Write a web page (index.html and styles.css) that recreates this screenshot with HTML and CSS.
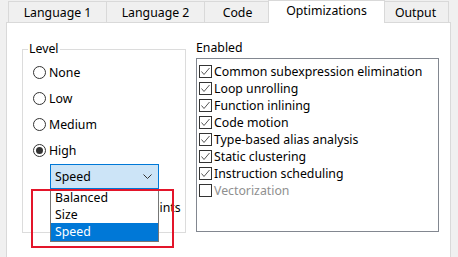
FILE: index.html
```html
<!DOCTYPE html>
<html>
<head>
<meta charset="utf-8">
<link rel="stylesheet" href="styles.css">
</head>
<body>
<div class="tabs">
  <div class="tab t-lang1">Language 1</div>
  <div class="tab t-lang2">Language 2</div>
  <div class="tab t-code">Code</div>
  <div class="tab t-opt selected">Optimizations</div>
  <div class="tab t-out">Output</div>
</div>
<div class="panel">
  <fieldset class="level">
    <legend>Level</legend>
    <div class="radio-row"><span class="radio"></span><span>None</span></div>
    <div class="radio-row"><span class="radio"></span><span>Low</span></div>
    <div class="radio-row"><span class="radio"></span><span>Medium</span></div>
    <div class="radio-row"><span class="radio checked"></span><span>High</span></div>
    <div class="combo-wrap">
      <div class="combo">
        <span>Speed</span>
        <svg class="chev" width="9" height="5" viewBox="0 0 9 5"><path d="M0.5 0.5 L4.5 4.5 L8.5 0.5" fill="none" stroke="#333" stroke-width="1"/></svg>
      </div>
      <div class="droplist">
        <div class="opt">Balanced</div>
        <div class="opt">Size</div>
        <div class="opt sel">Speed</div>
      </div>
      <div class="highlight"></div>
    </div>
    <div class="hidden-row"><span class="cb"></span><span>Respect constraints</span></div>
  </fieldset>
  <div class="enabled">
    <div class="enabled-label">Enabled</div>
    <div class="listbox">
      <div class="item"><svg class="cb" width="13" height="13" viewBox="0 0 13 13"><rect x="0.5" y="0.5" width="12" height="12" fill="#fff" stroke="#333"/><path d="M2.5 6.5 L5 9.5 L10.5 3" fill="none" stroke="#555" stroke-width="1"/></svg><span>Common subexpression elimination</span></div>
      <div class="item"><svg class="cb" width="13" height="13" viewBox="0 0 13 13"><rect x="0.5" y="0.5" width="12" height="12" fill="#fff" stroke="#333"/><path d="M2.5 6.5 L5 9.5 L10.5 3" fill="none" stroke="#555" stroke-width="1"/></svg><span>Loop unrolling</span></div>
      <div class="item"><svg class="cb" width="13" height="13" viewBox="0 0 13 13"><rect x="0.5" y="0.5" width="12" height="12" fill="#fff" stroke="#333"/><path d="M2.5 6.5 L5 9.5 L10.5 3" fill="none" stroke="#555" stroke-width="1"/></svg><span>Function inlining</span></div>
      <div class="item"><svg class="cb" width="13" height="13" viewBox="0 0 13 13"><rect x="0.5" y="0.5" width="12" height="12" fill="#fff" stroke="#333"/><path d="M2.5 6.5 L5 9.5 L10.5 3" fill="none" stroke="#555" stroke-width="1"/></svg><span>Code motion</span></div>
      <div class="item"><svg class="cb" width="13" height="13" viewBox="0 0 13 13"><rect x="0.5" y="0.5" width="12" height="12" fill="#fff" stroke="#333"/><path d="M2.5 6.5 L5 9.5 L10.5 3" fill="none" stroke="#555" stroke-width="1"/></svg><span>Type-based alias analysis</span></div>
      <div class="item"><svg class="cb" width="13" height="13" viewBox="0 0 13 13"><rect x="0.5" y="0.5" width="12" height="12" fill="#fff" stroke="#333"/><path d="M2.5 6.5 L5 9.5 L10.5 3" fill="none" stroke="#555" stroke-width="1"/></svg><span>Static clustering</span></div>
      <div class="item"><svg class="cb" width="13" height="13" viewBox="0 0 13 13"><rect x="0.5" y="0.5" width="12" height="12" fill="#fff" stroke="#333"/><path d="M2.5 6.5 L5 9.5 L10.5 3" fill="none" stroke="#555" stroke-width="1"/></svg><span>Instruction scheduling</span></div>
      <div class="item disabled"><svg class="cb" width="13" height="13" viewBox="0 0 13 13"><rect x="0.5" y="0.5" width="12" height="12" fill="#fff" stroke="#333"/></svg><span>Vectorization</span></div>
    </div>
  </div>
</div>
</body>
</html>
```
FILE: styles.css
```css
html, body {
  margin: 0;
  padding: 0;
  background: #f0f0f0;
  width: 458px;
  height: 257px;
  overflow: hidden;
  font-family: "Noto Sans", "Open Sans", sans-serif;
  font-size: 12.3px;
  color: #000;
}
.tabs {
  display: flex;
  align-items: flex-end;
  height: 22px;
  padding-left: 8px;
}
.tab {
  box-sizing: border-box;
  height: 21px;
  border: 1px solid #d9d9d9;
  border-bottom: none;
  background: #f0f0f0;
  display: flex;
  align-items: center;
  justify-content: center;
  line-height: 16px;
  padding-top: 1px;
}
.t-lang1 { width: 99px; }
.t-lang2 { width: 99px; margin-left: -1px; }
.t-code { width: 67px; margin-left: -1px; }
.t-opt { width: 117px; margin-left: -3px; }
.t-out { width: 67px; margin-left: -3px; }
.tab.selected {
  height: 23px;
  margin-bottom: -1px;
  background: #fff;
  position: relative;
  z-index: 1;
  padding-top: 0;
  padding-bottom: 3px;
}
.panel {
  box-sizing: border-box;
  margin-left: 6px;
  width: 445px;
  height: 240px;
  border: 1px solid #d9d9d9;
  background: #fff;
  display: flex;
  align-items: flex-start;
  padding: 18px 0 0 15px;
  gap: 10px;
}
.level {
  box-sizing: border-box;
  margin: 0;
  width: 164px;
  height: 192px;
  border: 1px solid #dcdcdc;
  padding: 2px 0 0 10px;
  position: relative;
}
.level legend {
  padding: 0 1px;
  margin-left: -5px;
  line-height: 16px;
}
.radio-row {
  height: 26px;
  display: flex;
  align-items: center;
  gap: 3px;
}
.radio {
  box-sizing: border-box;
  width: 13px;
  height: 13px;
  border: 1px solid #333;
  border-radius: 50%;
  background: #fff;
  display: flex;
  align-items: center;
  justify-content: center;
}
.radio.checked::after {
  content: "";
  width: 7px;
  height: 7px;
  border-radius: 50%;
  background: #333;
}
.combo-wrap {
  position: relative;
  margin: 1px 0 0 17px;
  width: 109px;
}
.combo {
  box-sizing: border-box;
  height: 25px;
  border: 1px solid #0078d7;
  background: #cce4f7;
  display: flex;
  align-items: center;
  justify-content: space-between;
  padding: 0 6px 0 4px;
}
.droplist {
  position: absolute;
  left: 0;
  top: 25px;
  width: 109px;
  box-sizing: border-box;
  border: 1px solid #767676;
  border-top: none;
  background: #fff;
  z-index: 2;
}
.opt {
  height: 17px;
  line-height: 17px;
  padding-left: 4px;
}
.opt.sel {
  background: #0078d7;
  color: #fff;
  height: 18px;
  line-height: 18px;
}
.highlight {
  position: absolute;
  left: -19px;
  top: 25px;
  width: 143px;
  height: 59px;
  box-sizing: border-box;
  border: 2px solid #e3152a;
  z-index: 3;
}
.hidden-row {
  margin: 10px 0 0 19px;
  height: 17px;
  display: flex;
  align-items: center;
  gap: 3px;
}
.hidden-row .cb {
  box-sizing: border-box;
  width: 13px;
  height: 13px;
  border: 1px solid #333;
}
.enabled {
  margin-top: -1px;
}
.enabled-label {
  line-height: 16px;
}
.listbox {
  box-sizing: border-box;
  margin-top: 2px;
  width: 243px;
  height: 174px;
  border: 1px solid #828790;
  padding: 4px 0 0 2px;
}
.item {
  height: 17px;
  display: flex;
  align-items: center;
  gap: 2px;
}
.cb {
  flex: none;
  display: block;
}
.item.disabled {
  color: #8f8f8f;
}
```
